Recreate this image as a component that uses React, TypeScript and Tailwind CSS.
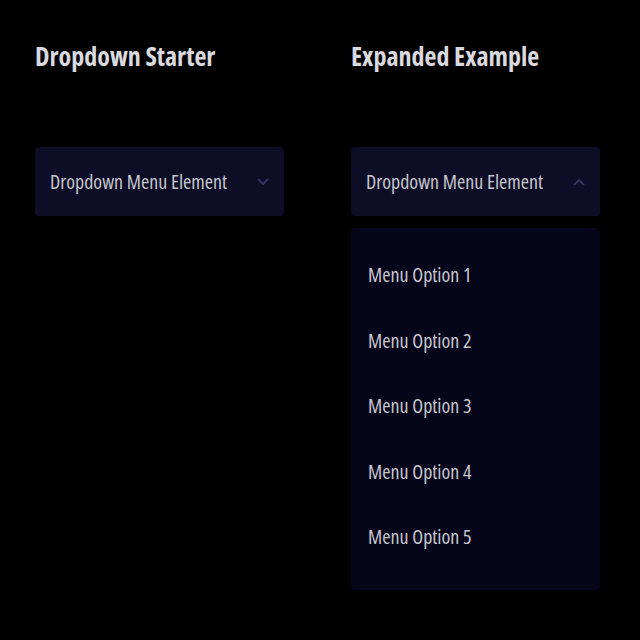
import React from "react";

const font = { fontFamily: '"Open Sans", "DejaVu Sans Condensed", sans-serif' };

function Chevron({ up }: { up?: boolean }) {
  return (
    <svg width="14" height="10" viewBox="0 0 14 10" fill="none" stroke="#34335f" strokeWidth="2">
      {up ? <path d="M2 8 L7 3 L12 8" /> : <path d="M2 2 L7 7 L12 2" />}
    </svg>
  );
}

function Button({ up }: { up?: boolean }) {
  return (
    <div className="flex h-[69px] w-[249px] items-center justify-between rounded-[4px] bg-[#0e0d26] pl-[15px] pr-[14px]">
      <span className="font-stretch-[75%] text-[20px] text-[#c6c6cf]">Dropdown Menu Element</span>
      <Chevron up={up} />
    </div>
  );
}

export default function App() {
  return (
    <div className="min-h-[640px] w-[640px] bg-black" style={font}>
      <div className="flex gap-[67px] pl-[35px] pt-[36px]">
        <div className="flex flex-col">
          <h1 className="font-stretch-[75%] text-[26px] font-bold leading-[40px] text-[#d9d9df]">Dropdown Starter</h1>
          <div className="mt-[71px]">
            <Button />
          </div>
        </div>
        <div className="flex flex-col">
          <h1 className="font-stretch-[75%] text-[26px] font-bold leading-[40px] text-[#d9d9df]">Expanded Example</h1>
          <div className="mt-[71px]">
            <Button up />
          </div>
          <div className="mt-[12px] flex h-[362px] w-[249px] flex-col rounded-[4px] bg-[#06051a] pl-[17px] pt-[32px]">
            {[1, 2, 3, 4, 5].map((n) => (
              <div key={n} className="flex h-[65.5px] items-start">
                <span className="font-stretch-[75%] text-[20px] leading-[30px] text-[#c6c6cf]">Menu Option {n}</span>
              </div>
            ))}
          </div>
        </div>
      </div>
    </div>
  );
}
